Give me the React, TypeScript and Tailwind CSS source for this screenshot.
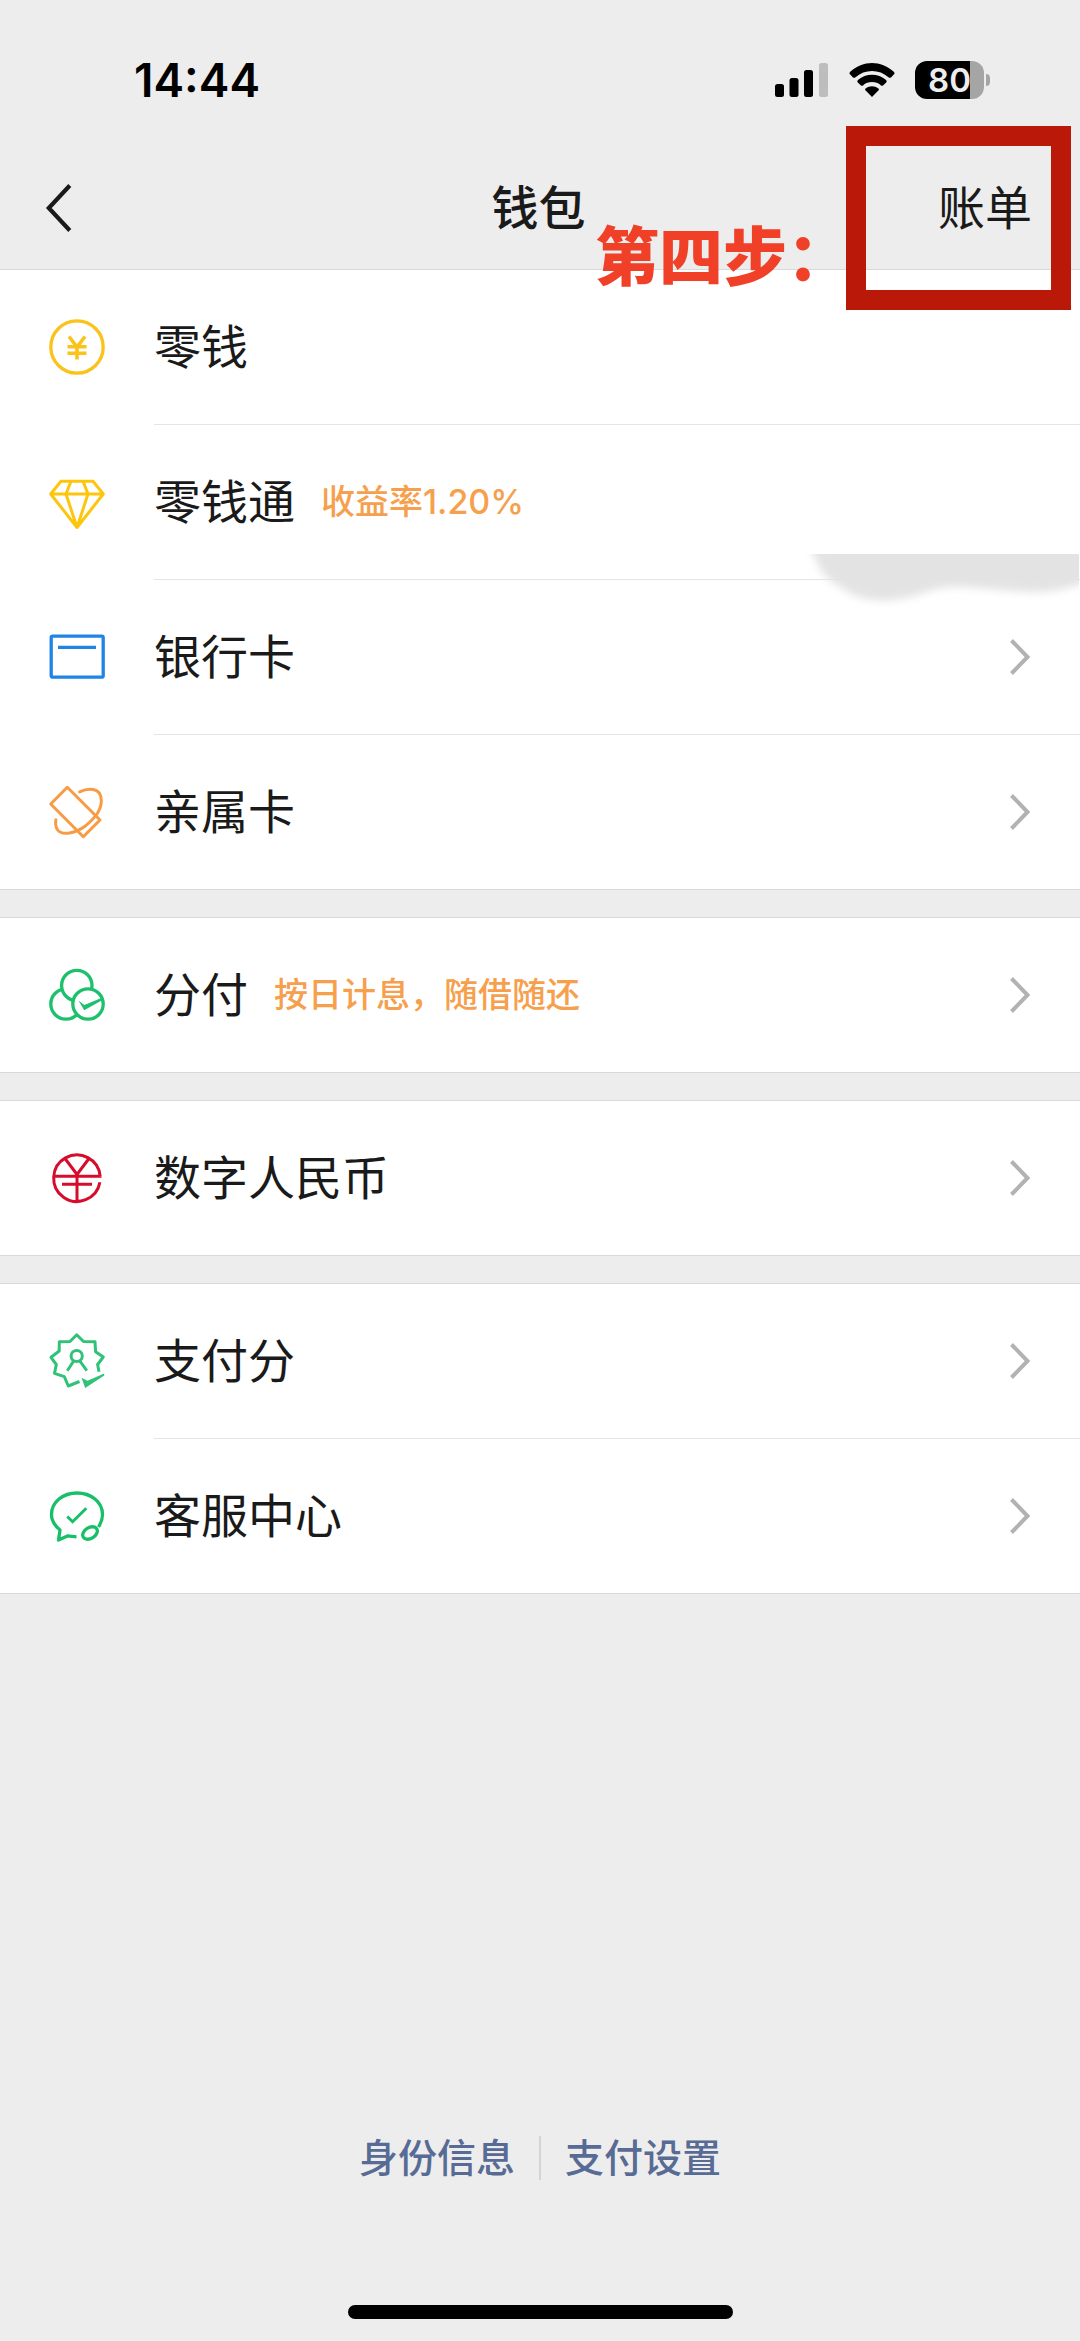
import type { ReactNode } from "react";

type Item = {
  label: string;
  note?: string;
  icon: ReactNode;
  arrow?: boolean;
};

function Icon({ color, children }: { color: string; children: ReactNode }) {
  return (
    <svg
      viewBox="0 0 64 64"
      className="w-16 h-16 shrink-0"
      fill="none"
      stroke={color}
      strokeWidth="3.3"
      aria-hidden="true"
    >
      {children}
    </svg>
  );
}

const CoinIcon = (
  <Icon color="#fbc21a">
    <circle cx="32" cy="32" r="26.2" />
    <path
      strokeWidth="3.6"
      d="M24 21.5L32 32L40 21.5M22.5 31.8H41.5M22.5 38.2H41.5M32 31V44.5"
    />
  </Icon>
);

const DiamondIcon = (
  <Icon color="#fdc60d">
    <path
      strokeWidth="3"
      strokeLinejoin="round"
      d="M16 11.3H48L58.3 24L32 57.5L5.7 24ZM5.7 24H58.3M26 11.3L21 24L32 57.5L43 24L38 11.3"
    />
  </Icon>
);

const BankCardIcon = (
  <Icon color="#2084e6">
    <rect x="6.2" y="11.2" width="52" height="41" rx="1.5" />
    <path d="M13 22.3H51" />
  </Icon>
);

const FamilyCardIcon = (
  <Icon color="#f79c45">
    <path
      strokeWidth="3"
      strokeLinejoin="round"
      d="M22.3 7.3L5.7 24L38.3 56.7L55 40Z"
    />
    <path
      strokeWidth="3"
      strokeLinecap="round"
      d="M34.6 11.8C44 7.5 54 8.5 55.8 16.5C58.5 29 50 37.5 41 45.5C31 53 17 56.5 12.3 49.5C10.5 46.5 10.3 43 10.9 39.8"
    />
  </Icon>
);

const FenfuIcon = (
  <Icon color="#1dc06d">
    <circle cx="21" cy="41" r="15.2" />
    <circle cx="31.8" cy="22.5" r="15.2" fill="#fff" />
    <circle cx="43" cy="41" r="15.2" fill="#fff" />
    <path
      fill="#1dc06d"
      stroke="none"
      d="M33.5 37.5L39.3 42L57 34.8L57.5 37L39.2 47.3Z"
    />
  </Icon>
);

const DigitalYuanIcon = (
  <Icon color="#d70c2a">
    <path
      strokeWidth="3"
      d="M56.5 30.3H8.5M55.2 30.3A23.3 23.3 0 1 0 54.9 36.3M20 12.5L32 28.5L44 12.5M32 27.5V55.5M17 38.2H47"
    />
  </Icon>
);

const ScoreIcon = (
  <Icon color="#30c277">
    <g strokeWidth="3">
      <path
        strokeLinejoin="round"
        d="M54 42.7L52.6 35.5L58.3 28L50.6 22.7L50 12.7L38.5 12.5L31.7 5.8L25 12.5L14.3 12.7L14.2 22L6 28.3L11.3 35.5L9.5 44.3L19.3 47.7L23.3 57L34.5 52.5"
      />
      <circle cx="31.7" cy="27" r="5.6" />
      <path d="M29 31.5L22.3 41.7M34.5 31.5L41.8 41.7" />
    </g>
    <path
      fill="#30c277"
      stroke="none"
      d="M36.5 48.8L42.5 51.8L59.2 44.6L59.2 46.6L40.2 59Z"
    />
  </Icon>
);

const ServiceIcon = (
  <Icon color="#17c068">
    <path
      strokeLinejoin="round"
      d="M53.5 43C56 39 57.5 35 57.5 30.5C57.5 18 46 9 32 9S6.5 18 6.5 30.5C6.5 36.5 9.5 41.5 15 46L13.500 56L23 51.8C26 52 28.5 52.7 31.5 52.8"
    />
    <ellipse cx="45" cy="49" rx="8" ry="5.4" transform="rotate(-32 45 49)" />
    <path strokeWidth="3" d="M22.3 32.5L27.6 37.7L41.3 24.3" />
  </Icon>
);

const groups: Item[][] = [
  [
    { label: "零钱", icon: CoinIcon },
    { label: "零钱通", note: "收益率1.20%", icon: DiamondIcon },
    { label: "银行卡", icon: BankCardIcon, arrow: true },
    { label: "亲属卡", icon: FamilyCardIcon, arrow: true },
  ],
  [{ label: "分付", note: "按日计息，随借随还", icon: FenfuIcon, arrow: true }],
  [{ label: "数字人民币", icon: DigitalYuanIcon, arrow: true }],
  [
    { label: "支付分", icon: ScoreIcon, arrow: true },
    { label: "客服中心", icon: ServiceIcon, arrow: true },
  ],
];

function StatusBar() {
  return (
    <div className="flex justify-between items-center pt-[53px] pb-10 pl-[134px] pr-[90px]">
      <span className="text-[46px] leading-[54px] font-semibold text-black">
        14:44
      </span>
      <div className="flex items-center">
        <svg viewBox="0 0 54 36" className="w-[54px] h-9" aria-hidden="true">
          <rect x="0" y="22" width="9" height="13" rx="2.5" />
          <rect x="14.5" y="16" width="9" height="19" rx="2.5" />
          <rect x="29" y="8" width="9" height="27" rx="2.5" />
          <rect x="44" y="1" width="9" height="34" rx="2.5" fill="#bdbdbd" />
        </svg>
        <svg viewBox="0 0 46 36" className="w-[46px] h-9 ml-5" aria-hidden="true">
          <path d="M1.2 12.6Q-0.2 11.2 1.2 9.8C14 -1.800 32 -1.800 44.800 9.800Q46.200 11.200 44.800 12.600L42 15.400Q41 16.300 39.800 15.400C30 6.800 16 6.800 6.200 15.400Q5 16.300 4 15.400Z" />
          <path d="M8.800 20.500Q7.600 19.300 8.900 18C17 11 29 11 37.100 18Q38.400 19.300 37.200 20.500L34.300 23.300Q33.200 24.300 32 23.400C27 19 19 19 14 23.400Q12.800 24.300 11.700 23.300Z" />
          <path d="M16.400 28.200Q15.400 27.200 16.600 26.400C20.500 23.400 25.500 23.400 29.400 26.400Q30.600 27.200 29.600 28.200L23 35Z" />
        </svg>
        <div className="ml-5 flex items-center">
          <div className="w-[69px] h-[38px] rounded-xl bg-linear-to-r from-black from-80% to-[#a5a5a5] to-80% flex items-center justify-center">
            <span className="text-[33px] leading-[38px] font-semibold text-[#ededed]">
              80
            </span>
          </div>
          <div className="ml-[2px] w-1 h-3 rounded-r-full bg-[#a5a5a5]" />
        </div>
      </div>
    </div>
  );
}

function NavBar() {
  return (
    <div className="grid grid-cols-3 items-center pt-7 pb-7 pl-[45px] pr-12 text-[47px] leading-[66px] text-[#1a1a1a]">
      <button type="button" aria-label="返回" className="justify-self-start">
        <svg
          viewBox="0 0 28 48"
          className="w-7 h-12"
          fill="none"
          stroke="#1a1a1a"
          strokeWidth="4.2"
          aria-hidden="true"
        >
          <path d="M24.8 1.5L3.8 24L24.8 46.5" />
        </svg>
      </button>
      <h1 className="text-center font-medium">钱包</h1>
      <button type="button" className="justify-self-end">
        账单
      </button>
    </div>
  );
}

function Row({ item, last }: { item: Item; last: boolean }) {
  return (
    <li>
      <button
        type="button"
        className="w-full flex items-center pl-[45px] pr-12 py-11 text-left"
      >
        {item.icon}
        <span className="ml-[45px] text-[47px] leading-[66px] text-[#1a1a1a]">
          {item.label}
        </span>
        {item.note && (
          <span className="ml-[26px] text-[34px] leading-[66px] font-medium text-[#f6a04d]">
            {item.note}
          </span>
        )}
        {item.arrow && (
          <svg
            viewBox="0 0 24 40"
            className="w-6 h-10 ml-auto"
            fill="none"
            stroke="#b2b2b2"
            strokeWidth="4"
            aria-hidden="true"
          >
            <path d="M3.5 3.5L19.5 20L3.5 36.5" />
          </svg>
        )}
      </button>
      {!last && <div className="ml-[154px] h-px bg-[#e5e5e5]" />}
    </li>
  );
}

function Smudge() {
  return (
    <svg
      viewBox="0 0 280 64"
      className="absolute top-[285px] right-px w-[280px] h-16 pointer-events-none"
      aria-hidden="true"
    >
      <defs>
        <filter id="soft" x="-10%" y="-30%" width="120%" height="160%">
          <feGaussianBlur stdDeviation="4" />
        </filter>
      </defs>
      <path
        filter="url(#soft)"
        fill="#e3e3e3"
        d="M5 -20L18 8C24 24 36 30 48 37C60 46 84 49 106 44C128 39 138 32 158 33C182 33 200 37 232 38C256 39 270 33 300 25V-20Z"
      />
    </svg>
  );
}

export default function App() {
  return (
    <div className="relative min-h-screen flex flex-col bg-[#ededed] font-['Inter','Noto_Sans_CJK_SC',sans-serif]">
      <header>
        <StatusBar />
        <NavBar />
      </header>

      <main className="relative flex flex-col gap-[27px]">
        {groups.map((group, index) => (
          <ul key={index} className="bg-white border-y border-[#d9d9d9]">
            {group.map((item, i) => (
              <Row key={item.label} item={item} last={i === group.length - 1} />
            ))}
          </ul>
        ))}
        <Smudge />
      </main>

      <footer className="mt-auto pb-[22px] flex flex-col items-center">
        <div className="flex items-center gap-6 text-[39px] leading-[56px] font-medium text-[#576b95]">
          <a href="#identity">身份信息</a>
          <span className="w-[2px] h-11 bg-[#d5d5d5]" />
          <a href="#settings">支付设置</a>
        </div>
        <div className="mt-[119px] w-[385px] h-[14px] rounded-full bg-black" />
      </footer>

      {/* step marker over the bill button */}
      <div className="absolute top-[126px] right-[9px] w-[225px] h-[184px] border-[20px] border-[#ba1808] pointer-events-none" />
      <p className="absolute top-[209px] right-[229px] text-[64px] leading-[96px] font-black text-[#f04128] pointer-events-none">
        第四步：
      </p>
    </div>
  );
}
